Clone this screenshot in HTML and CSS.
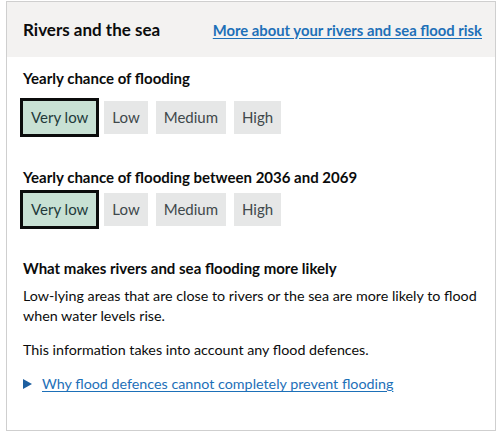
FILE: index.html
```html
<!DOCTYPE html>
<html lang="en">
<head>
<meta charset="utf-8">
<title>Rivers and the sea</title>
<link rel="stylesheet" href="styles.css">
</head>
<body>
<div class="card">
  <div class="card-header">
    <h2 class="card-title">Rivers and the sea</h2>
    <a class="header-link" href="#">More about your rivers and sea flood risk</a>
  </div>
  <div class="card-body">
    <h3 class="heading heading-first">Yearly chance of flooding</h3>
    <ul class="tags tags-first">
      <li class="tag tag-selected">Very low</li>
      <li class="tag">Low</li>
      <li class="tag">Medium</li>
      <li class="tag">High</li>
    </ul>
    <h3 class="heading heading-second">Yearly chance of flooding between 2036 and 2069</h3>
    <ul class="tags tags-second">
      <li class="tag tag-selected">Very low</li>
      <li class="tag">Low</li>
      <li class="tag">Medium</li>
      <li class="tag">High</li>
    </ul>
    <h3 class="heading heading-third">What makes rivers and sea flooding more likely</h3>
    <p class="text text-first">Low-lying areas that are close to rivers or the sea are more likely to flood when water levels rise.</p>
    <p class="text text-second">This information takes into account any flood defences.</p>
    <div class="details">
      <svg class="details-arrow" width="9" height="10" viewBox="0 0 9 10" aria-hidden="true"><polygon points="0,0 9,5 0,10" fill="#1d5fa0"/></svg>
      <a class="details-link" href="#">Why flood defences cannot completely prevent flooding</a>
    </div>
  </div>
</div>
</body>
</html>
```

FILE: styles.css
```css
* { box-sizing: border-box; }
html, body { margin: 0; padding: 0; background: #ffffff; }
body {
  font-family: Lato, "Liberation Sans", Arial, sans-serif;
  color: #0b0c0c;
}
.card {
  margin: 1px 0 0 6px;
  width: 490px;
  height: 430px;
  border: 1px solid #cfcfcf;
}
.card-header {
  height: 55px;
  background: #f3f2f1;
  display: flex;
  align-items: center;
  justify-content: space-between;
  padding: 0 13px 0 16px;
}
.card-title {
  margin: 0;
  font-size: 17px;
  font-weight: 700;
  line-height: 24px;
}
.header-link {
  color: #1d70b8;
  font-size: 14.8px;
  font-weight: 700;
  text-decoration: underline;
  text-underline-offset: 2px;
}
.card-body {
  padding: 0 8px 0 16px;
}
.heading {
  margin: 0;
  font-size: 15px;
  font-weight: 700;
  line-height: 20px;
}
.heading-first { margin-top: 11px; }
.heading-second { margin-top: 33px; }
.heading-third { margin-top: 32px; }
.tags {
  list-style: none;
  margin: 0;
  padding: 0;
  display: flex;
  gap: 8px;
}
.tags-first { margin-top: 13px; }
.tags-second { margin-top: 6px; }
.tag {
  height: 33px;
  line-height: 33px;
  padding: 0 8px;
  background: #e6e7e7;
  color: #40484b;
  font-size: 15px;
}
.tag-selected {
  background: #c8e1d4;
  color: #22393a;
  outline: 3px solid #0b0c0c;
}
.text {
  margin: 0;
  font-size: 14.3px;
  line-height: 20px;
}
.text-first { margin-top: 8px; }
.text-second { margin-top: 14px; }
.details {
  margin-top: 14px;
  display: flex;
  align-items: center;
  gap: 10px;
  line-height: 20px;
}
.details-arrow {
  flex: none;
  display: block;
}
.details-link {
  color: #1d70b8;
  font-size: 14.3px;
  text-decoration: underline;
  text-underline-offset: 2px;
}
```
